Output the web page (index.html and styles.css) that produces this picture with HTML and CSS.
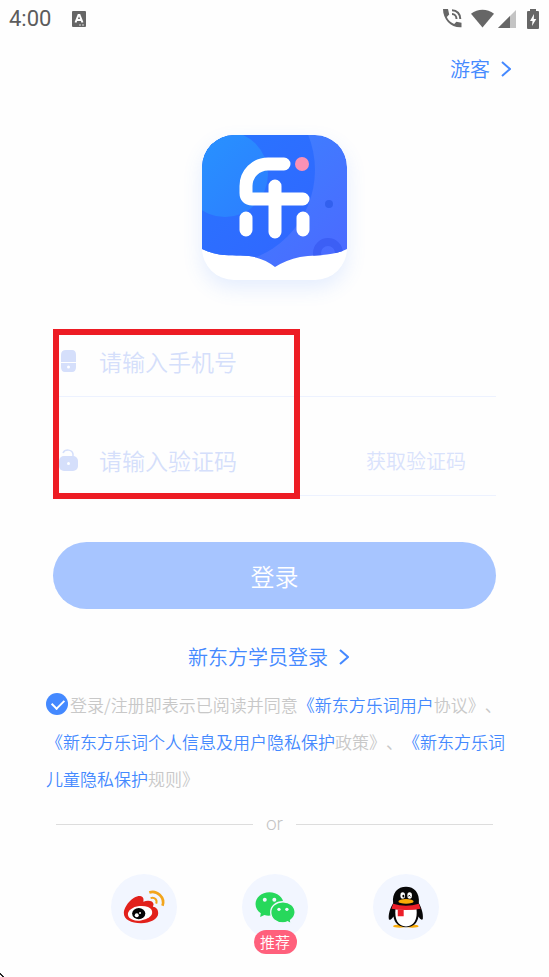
FILE: index.html
```
<!DOCTYPE html>
<html lang="zh-CN">

<head>
    <meta charset="UTF-8">
    <meta name="viewport" content="width=device-width, initial-scale=1.0">
    <title>登录</title>
    <link rel="stylesheet" href="styles.css">
</head>

<body>
    <div class="status-bar">
        <span class="clock">4:00</span>
        <svg class="notice" width="14" height="16" viewBox="0 0 14 16">
            <rect width="14" height="16" rx="1" fill="#666" />
            <path d="M3.500 11.500L6.500 4H7.500L10.500 11.500M5 9H9" fill="none" stroke="#fff" stroke-width="2" />
            <path d="M7 14H13" stroke="#ddd" stroke-width="1" stroke-dasharray="2 1" />
        </svg>
        <div class="status-icons">
            <!-- call -->
            <svg width="19" height="19" viewBox="0 0 19 19">
                <path d="M0 0H5L6.200 5.500L3.800 8C5 11 8 13.800 11.200 15L13.400 12.800L18.500 13.800V18.300C8 19 0 10.500 0 0Z" fill="#666" />
                <path d="M9 5C11.500 5 13.500 7 13.500 10M9 1.300C14 1.300 17.300 5 17.300 10" fill="none" stroke="#666" stroke-width="2" />
            </svg>
            <!-- wifi -->
            <svg width="23" height="19" viewBox="0 0 24 19">
                <path d="M0 4.500C7 -1 17 -1 24 4.500L12 19Z" fill="#666" />
            </svg>
            <!-- signal -->
            <svg width="18" height="18" viewBox="0 0 18 18">
                <path d="M0 18L18 0V18Z" fill="#c4c4c4" />
                <path d="M0 18L12 6V18Z" fill="#666" />
            </svg>
            <!-- battery -->
            <svg class="battery" width="12" height="20" viewBox="0 0 12 20">
                <path d="M3 2V0H9V2H11Q12 2 12 3V19Q12 20 11 20H1Q0 20 0 19V3Q0 2 1 2Z" fill="#666" />
                <path d="M7 5L3 12H5.500L5 17L9.300 10H6.800Z" fill="#fff" />
            </svg>
        </div>
    </div>

    <div class="guest-row">
        <a class="link" href="#">游客
            <svg width="10" height="16" viewBox="0 0 10 16">
                <path d="M1 1L9 8L1 15" />
            </svg>
        </a>
    </div>

    <svg class="logo" width="145" height="145" viewBox="0 0 145 145">
        <defs>
            <linearGradient id="base" x1="0" y1="0" x2="1" y2="1">
                <stop offset="0" stop-color="#3888ff" />
                <stop offset="1" stop-color="#4d67ff" />
            </linearGradient>
            <linearGradient id="deep" x1="0" y1="0" x2="1" y2="1">
                <stop offset="0" stop-color="#227fff" />
                <stop offset="1" stop-color="#3265ff" />
            </linearGradient>
            <linearGradient id="light" x1="0" y1="0" x2="1" y2="1">
                <stop offset="0" stop-color="#2795ff" />
                <stop offset="1" stop-color="#2d7dff" />
            </linearGradient>
            <clipPath id="tile">
                <path d="M32 0H113A32 32 0 0 1 145 32V114C129 122 114 119 98 122Q84 125 73 132Q62 123 47 121C30 120 16 122 0 114V32A32 32 0 0 1 32 0Z" />
            </clipPath>
        </defs>
        <g clip-path="url(#tile)">
            <rect width="145" height="145" fill="url(#base)" />
            <circle cx="19" cy="35" r="94" fill="url(#deep)" />
            <circle cx="23" cy="39" r="43" fill="url(#light)" />
            <circle cx="127" cy="69" r="4" fill="#3260ee" />
            <circle cx="126" cy="118" r="11" fill="none" stroke="#3c5ff5" stroke-width="8" />
        </g>
        <g class="logo-mark">
            <path d="M82 29H66A22 22 0 0 0 44 51V58Q44 64 50 64H101" />
            <path d="M73 51V97M44 83V95M101 83V95" />
        </g>
        <circle cx="100" cy="29" r="7" fill="#fa91b5" />
    </svg>

    <form class="login">
        <div class="field">
            <svg width="20" height="22" viewBox="0 0 20 22">
                <path d="M7 0H13Q17 0 17 5V12H2V5Q2 0 7 0ZM2 13H17V17Q17 22 13 22H6Q2 22 2 17Z" fill="#d5dffb" />
                <circle cx="9.500" cy="17" r="1.500" fill="#fff" />
            </svg>
            <input type="tel" placeholder="请输入手机号" aria-label="手机号">
        </div>
        <div class="field">
            <svg width="20" height="22" viewBox="0 0 20 22">
                <path d="M4 4C6 0 13 0 14 5V8" fill="none" stroke="#d5dffb" stroke-width="1.500" />
                <rect y="7" width="19" height="15" rx="5" fill="#d5dffb" />
                <circle cx="9.500" cy="14.500" r="1.500" fill="#fff" />
            </svg>
            <input type="text" placeholder="请输入验证码" aria-label="验证码">
            <button type="button" class="get-code">获取验证码</button>
        </div>
        <div class="highlight"></div>
        <button type="submit" class="submit">登录</button>
    </form>

    <div class="student-row">
        <a class="link" href="#">新东方学员登录
            <svg width="10" height="16" viewBox="0 0 10 16">
                <path d="M1 1L9 8L1 15" />
            </svg>
        </a>
    </div>

    <div class="terms">
        <input type="checkbox" id="agree" checked><label for="agree">登录/注册即表示已阅读并同意</label><a href="#">《新东方乐词用户</a>协议》、<a href="#">《新东方乐词个人信息及用户隐私保护</a>政策》、<a href="#">《新东方乐词儿童隐私保护</a>规则》
    </div>

    <div class="divider">or</div>

    <div class="social">
        <a href="#" aria-label="微博">
            <svg viewBox="30 26 200 200">
                <path d="M69 145C69 126 93 93 118 93C128 94 130 102 128 110C142 105 158 107 159 118L157 125C169 127 173 134 173 145C173 163 148 175 121 175C91 175 69 164 69 145Z" fill="#e2211c" />
                <ellipse cx="118" cy="145" rx="37" ry="22" transform="rotate(-7 118 145)" fill="#fff" />
                <ellipse cx="114" cy="146" rx="20" ry="17" fill="#050505" />
                <circle cx="108" cy="151" r="6" fill="#fff" />
                <circle cx="118" cy="144" r="3" fill="#fff" />
                <path d="M146 82C169 74 195 97 186 122" fill="none" stroke="#f2a51c" stroke-width="8" />
                <path d="M150 99C163 95 171 105 167 116" fill="none" stroke="#f2a51c" stroke-width="6" />
            </svg>
        </a>
        <a href="#" aria-label="微信">
            <svg viewBox="33 26 200 200">
                <path d="M116 81C92 81 74 97 74 117C74 129 80 138 90 145L88 156L101 150Q109 153 118 152C142 152 159 137 159 117C159 97 140 81 116 81Z" fill="#27d85b" />
                <path d="M157 110C136 110 120 124 120 142C120 161 136 174 157 174Q165 174 171 171L182 177L180 166C189 160 194 152 194 142C194 124 178 110 157 110Z" fill="#27d85b" stroke="#f2f6ff" stroke-width="4" />
                <g fill="#f2f6ff">
                    <circle cx="102" cy="104" r="6" />
                    <circle cx="131" cy="104" r="6" />
                    <circle cx="145" cy="133" r="5" />
                    <circle cx="169" cy="133" r="5" />
                </g>
            </svg>
            <span class="badge">推荐</span>
        </a>
        <a href="#" aria-label="QQ">
            <svg viewBox="36 26 200 200">
                <ellipse cx="117" cy="184" rx="20" ry="5" fill="#faab07" />
                <ellipse cx="155" cy="184" rx="19" ry="5" fill="#faab07" />
                <path d="M97 115C93 83 111 65 136 65C161 65 178 83 175 115C182 127 189 145 187 162C184 168 178 162 174 155C170 176 158 187 136 187C114 187 101 175 98 155C93 163 88 168 84 163C82 147 89 128 97 115Z" fill="#080808" />
                <path d="M104 133C101 163 111 185 136 185C161 185 171 163 168 133Z" fill="#fff" />
                <path d="M97 116Q136 128 175 116L180 131Q136 139 92 131Z" fill="#ed1f29" />
                <path d="M111 134L129 135V154H111Z" fill="#ed1f29" />
                <ellipse cx="126" cy="91" rx="7" ry="10" fill="#fff" />
                <ellipse cx="147" cy="91" rx="7" ry="10" fill="#fff" />
                <ellipse cx="128" cy="93" rx="3" ry="4" />
                <path d="M143 94Q146 87 149 94" fill="none" stroke="#000" stroke-width="3" />
                <ellipse cx="136" cy="109" rx="23" ry="7" fill="#faab07" />
            </svg>
        </a>
    </div>

    <svg class="pointer" width="4" height="4" viewBox="0 0 4 4">
        <path d="M0 0H1V1H2V2H3V3H4V4H2V3H1V2H0Z" fill="#222" />
    </svg>
</body>

</html>
```
FILE: styles.css
```
* {
    box-sizing: border-box;
    margin: 0;
    padding: 0;
}

body {
    position: relative;
    min-height: 100vh;
    font-family: "Noto Sans CJK SC", sans-serif;
    font-weight: 350;
    background-color: #fefefe;
    text-spacing-trim: space-all;
}

a {
    color: #4489ff;
    text-decoration: none;
}

button,
input {
    font-family: inherit;
    font-weight: inherit;
    border: none;
    background: none;
}

svg {
    display: block;
    flex: none;
}

.status-bar {
    display: flex;
    align-items: center;
    height: 37px;
    padding: 0 10px 0 9px;
}

.clock {
    font-family: Roboto, sans-serif;
    font-size: 22px;
    font-weight: 400;
    color: #5c5c5c;
}

.notice {
    margin-left: 21px;
}

.status-icons {
    display: flex;
    align-items: center;
    gap: 9px;
    margin-left: auto;
}

.status-icons svg + svg + svg {
    margin-left: -5px;
}

.status-icons .battery.battery {
    margin-left: 2px;
}

.guest-row {
    display: flex;
    justify-content: flex-end;
    align-items: center;
    height: 64px;
    padding-right: 38px;
}

.link {
    display: flex;
    align-items: center;
    gap: 11px;
    font-size: 20px;
    line-height: 36px;
}

.link svg {
    fill: none;
    stroke: #4489ff;
    stroke-width: 2;
}

.logo {
    margin: 34px auto 46px;
    border-radius: 32px;
    background-color: #fff;
    box-shadow: 0 8px 20px rgba(68, 137, 255, 0.14);
}

.logo-mark {
    fill: none;
    stroke: #fff;
    stroke-width: 13;
    stroke-linecap: round;
}

.login {
    position: relative;
    margin: 0 53px;
}

.field {
    display: flex;
    align-items: center;
    height: 71px;
    margin-bottom: 28px;
    padding: 0 30px 0 6px;
    border-bottom: 1px solid #edf2ff;
}

.field input {
    flex: 1;
    min-width: 0;
    height: 36px;
    margin-left: 20px;
    font-size: 23px;
    color: #333;
    outline: none;
}

.field input::placeholder {
    color: #d5dffb;
}

.get-code {
    font-size: 20px;
    color: #d9e2fc;
}

/* red frame over the two inputs */
.highlight {
    position: absolute;
    top: 3px;
    left: 0;
    width: 247px;
    height: 170px;
    border: 6px solid #ed1c24;
    pointer-events: none;
}

.submit {
    width: 100%;
    height: 67px;
    margin-top: 18px;
    border-radius: 34px;
    font-size: 24px;
    color: #fff;
    background-color: #a7c5ff;
}

.student-row {
    display: flex;
    justify-content: center;
    margin: 30px 0 11px;
    padding-right: 12px;
}

.terms {
    margin: 0 42px 0 46px;
    font-size: 17px;
    line-height: 37px;
    color: #c8c8c8;
}

.terms input {
    appearance: none;
    position: relative;
    width: 22px;
    height: 22px;
    margin: 7px 2px 0 0;
    border-radius: 50%;
    vertical-align: top;
    background-color: #4489ff;
}

.terms input:checked::after {
    content: "";
    position: absolute;
    top: 6px;
    left: 6px;
    width: 10px;
    height: 6px;
    border: solid #fff;
    border-width: 0 0 2px 2px;
    transform: rotate(-45deg);
}

.divider {
    display: flex;
    align-items: center;
    gap: 13px;
    margin: 14px 56px 37px;
    font-family: Roboto, sans-serif;
    font-size: 19px;
    font-weight: 300;
    line-height: 26px;
    color: #c4c4c4;
}

.divider::before,
.divider::after {
    content: "";
    flex: 1;
    height: 1px;
    background-color: #ddd;
}

.social {
    display: flex;
    justify-content: center;
    gap: 65px;
}

.social a {
    position: relative;
    width: 66px;
    height: 66px;
    border-radius: 50%;
    background-color: #f2f6ff;
}

.badge {
    position: absolute;
    left: 12px;
    bottom: -14px;
    width: 43px;
    border-radius: 12px;
    font-size: 15px;
    line-height: 24px;
    text-align: center;
    color: #fff;
    background-color: #ff607c;
}

.pointer {
    position: absolute;
    left: 0;
    bottom: 0;
}
```
